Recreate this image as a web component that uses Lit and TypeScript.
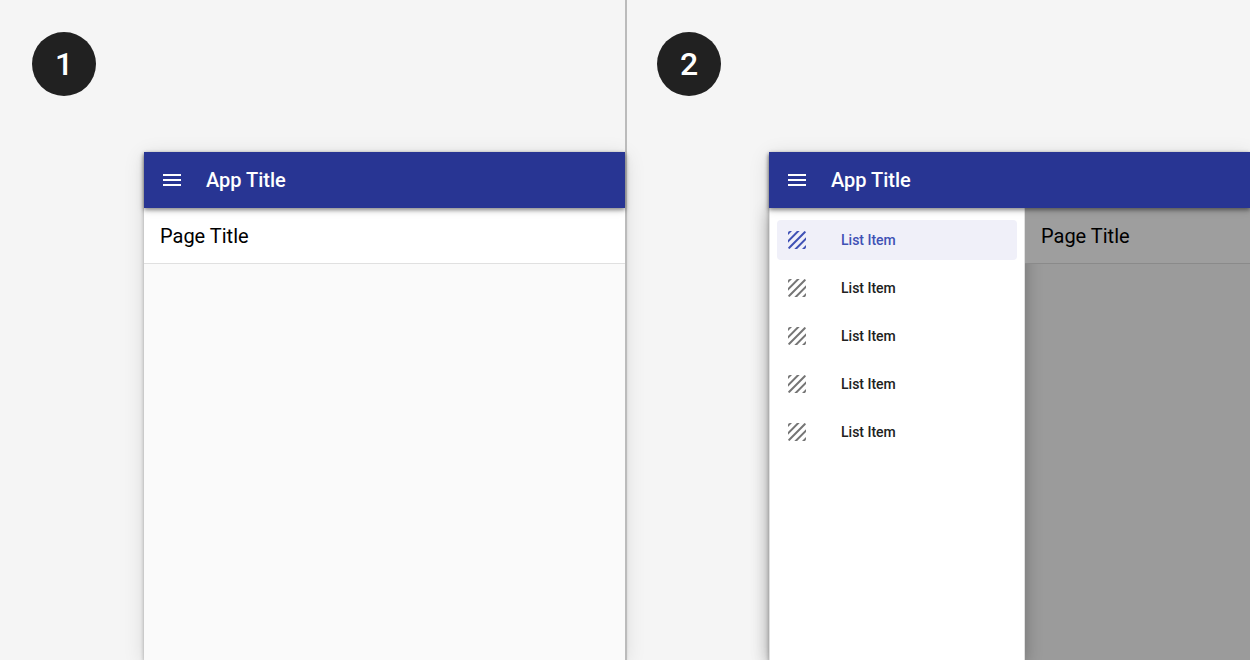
import { LitElement, html, css, svg } from "lit";
import { customElement, property } from "lit/decorators.js";

const menuIcon = svg`<path d="M3 18h18v-2H3v2zm0-5h18v-2H3v2zm0-7v2h18V6H3z"/>`;
const textureIcon = svg`<path d="M19.51 3.08L3.08 19.51c.09.34.27.65.51.9.25.24.56.42.9.51L20.93 4.49c-.19-.69-.73-1.23-1.42-1.41zM11.88 3L3 11.88v2.83L14.71 3h-2.83zM5 3c-1.1 0-2 .9-2 2v2l4-4H5zm14 18c.55 0 1.05-.22 1.41-.59.37-.36.59-.86.59-1.41v-2l-4 4h2zm-9.71 0h2.83L21 12.12V9.29L9.29 21z"/>`;

@customElement("nav-drawer")
export class NavDrawer extends LitElement {
  @property({ type: Array }) items: string[] = [];
  @property({ type: Number }) active = 0;

  static styles = css`
    :host {
      display: block;
      box-sizing: border-box;
      width: 256px;
      padding: 12px 8px;
      background: #fff;
      box-shadow: 0 4px 16px rgba(0, 0, 0, 0.28), inset 1px 0 #e0e0e0, inset -1px 0 #e0e0e0;
    }
    .list {
      display: flex;
      flex-direction: column;
      gap: 8px;
      margin: 0;
      padding: 0;
      list-style: none;
    }
    .item {
      display: flex;
      align-items: center;
      gap: 32px;
      height: 40px;
      padding: 0 8px;
      border-radius: 4px;
      color: #212121;
      font-size: 14px;
      font-weight: 500;
      text-decoration: none;
    }
    .icon {
      width: 24px;
      height: 24px;
      fill: #757575;
    }
    .active {
      background: #f0f0f9;
      color: #3f51b5;
    }
    .active .icon {
      fill: #3f51b5;
    }
  `;

  render() {
    return html`<nav aria-label="Main">
      <ul class="list">
        ${this.items.map(
          (label, i) => html`<li>
            <a class="item ${i === this.active ? "active" : ""}" href="#item-${i + 1}">
              <svg class="icon" viewBox="0 0 24 24" aria-hidden="true">${textureIcon}</svg>
              <span>${label}</span>
            </a>
          </li>`
        )}
      </ul>
    </nav>`;
  }
}

@customElement("app-window")
export class AppWindow extends LitElement {
  @property({ type: Boolean, reflect: true }) open = false;

  static styles = css`
    :host {
      display: flex;
      flex-direction: column;
      background: #fafafa;
      box-shadow: 0 2px 4px rgba(0, 0, 0, 0.3), 0 4px 20px rgba(0, 0, 0, 0.12);
    }
    .bar {
      display: flex;
      align-items: center;
      gap: 22px;
      height: 56px;
      padding: 0 16px;
      background: #283593;
      color: #fff;
      box-shadow: 0 2px 4px rgba(0, 0, 0, 0.4), 0 3px 8px rgba(0, 0, 0, 0.12);
      z-index: 2;
    }
    .menu {
      display: flex;
      padding: 0;
      border: 0;
      background: none;
      color: inherit;
    }
    .icon {
      width: 24px;
      height: 24px;
      fill: currentColor;
    }
    .title,
    .heading {
      margin: 0;
      font-size: 20px;
      line-height: 24px;
    }
    .title {
      font-weight: 500;
    }
    .heading {
      position: relative;
      z-index: 1;
      padding: 16px 16px 15px;
      border-bottom: 1px solid #e0e0e0;
      background: #fff;
      color: #000;
      font-weight: 400;
    }
    .body {
      display: flex;
      flex: 1;
    }
    .page {
      flex: 1;
    }
    :host([open]) .page {
      background: #9b9b9b;
    }
    :host([open]) .heading {
      border-color: #8a8a8a;
      background: #9e9e9e;
    }
    .drawer {
      z-index: 1;
    }
  `;

  render() {
    return html`
      <header class="bar">
        <button class="menu" aria-label="Menu" aria-expanded=${this.open ? "true" : "false"}>
          <svg class="icon" viewBox="0 0 24 24" aria-hidden="true">${menuIcon}</svg>
        </button>
        <h1 class="title">App Title</h1>
      </header>
      <div class="body">
        ${this.open
          ? html`<nav-drawer class="drawer" .items=${Array(5).fill("List Item")}></nav-drawer>`
          : null}
        <main class="page"><h2 class="heading">Page Title</h2></main>
      </div>
    `;
  }
}

@customElement("app-root")
export class AppRoot extends LitElement {
  static styles = css`
    :host {
      display: grid;
      grid-template-columns: 1fr 1fr;
      min-height: 100vh;
      overflow: hidden;
      background: #f5f5f5;
      font-family: Roboto, "Liberation Sans", sans-serif;
    }
    .step {
      display: flex;
      flex-direction: column;
      gap: 56px;
      box-sizing: border-box;
      padding: 32px 0 0 32px;
    }
    .divided {
      padding-left: 30px;
      border-left: 2px solid #bbb;
    }
    .badge {
      display: grid;
      place-items: center;
      width: 64px;
      height: 64px;
      border-radius: 50%;
      background: #212121;
      color: #fff;
      font-size: 32px;
      font-weight: 500;
    }
    .window {
      flex: 1;
      margin-left: 112px;
    }
  `;

  render() {
    return html`
      <section class="step">
        <div class="badge">1</div>
        <app-window class="window"></app-window>
      </section>
      <section class="step divided">
        <div class="badge">2</div>
        <app-window class="window" open></app-window>
      </section>
    `;
  }
}
